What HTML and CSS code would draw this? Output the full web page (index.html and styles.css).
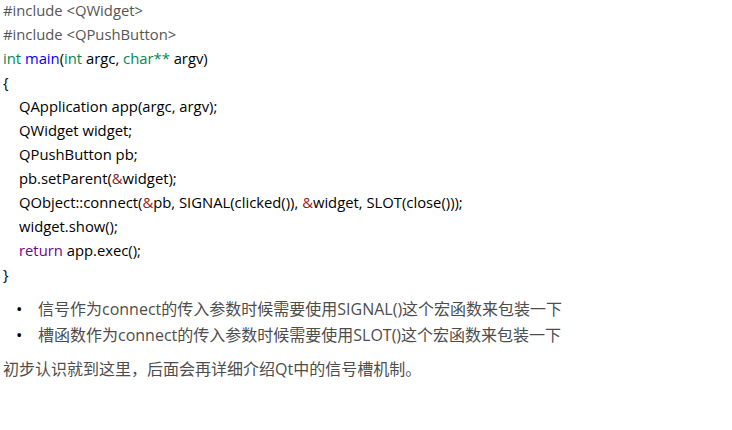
FILE: index.html
```html
<!DOCTYPE html>
<html lang="zh-CN">
<head>
<meta charset="utf-8">
<title>Qt</title>
<link rel="stylesheet" href="styles.css">
</head>
<body>
<div class="page">
<div class="code">
<div class="line"><span class="meta">#include &lt;QWidget&gt;</span></div>
<div class="line"><span class="meta">#include &lt;QPushButton&gt;</span></div>
<div class="line"><span class="type">int</span> <span class="def">main</span>(<span class="type">int</span> argc, <span class="type">char**</span> argv)</div>
<div class="line">{</div>
<div class="line ind">QApplication app(argc, argv);</div>
<div class="line ind">QWidget widget;</div>
<div class="line ind">QPushButton pb;</div>
<div class="line ind">pb.setParent(<span class="op">&amp;</span>widget);</div>
<div class="line ind">QObject::connect(<span class="op">&amp;</span>pb, SIGNAL(clicked()), <span class="op">&amp;</span>widget, SLOT(close()));</div>
<div class="line ind">widget.show();</div>
<div class="line ind"><span class="kw">return</span> app.exec();</div>
<div class="line">}</div>
</div>
<ul class="list">
<li class="item">信号作为connect的传入参数时候需要使用SIGNAL()这个宏函数来包装一下</li>
<li class="item">槽函数作为connect的传入参数时候需要使用SLOT()这个宏函数来包装一下</li>
</ul>
<p class="para">初步认识就到这里，后面会再详细介绍Qt中的信号槽机制。</p>
</div>
</body>
</html>
```
FILE: styles.css
```css
html, body {
  margin: 0;
  padding: 0;
  background: #ffffff;
}
.page {
  padding: 0 3px;
  font-family: "Open Sans", "Noto Sans CJK SC", sans-serif;
  color: #4d4d4d;
}
.code {
  margin-top: -2px;
  font-family: "Open Sans", "Noto Sans CJK SC", sans-serif;
  font-size: 14.8px;
  line-height: 24px;
  color: #000000;
}
.line {
  white-space: pre;
  height: 24px;
}
.line.ind { padding-left: 16px; }
.meta { color: #555555; }
.type { color: #008855; }
.def { color: #0000ff; }
.kw { color: #770088; }
.op { color: #981a1a; }
.list {
  margin: 10px 0 0;
  padding-left: 13px;
  list-style: none;
  font-size: 16px;
  line-height: 26px;
}
.item::before {
  content: "\2022";
  display: inline-block;
  width: 22px;
  color: #000000;
  font-size: 17px;
}
.para {
  margin: 8px 0 0;
  font-size: 16px;
  line-height: 26px;
}
```
